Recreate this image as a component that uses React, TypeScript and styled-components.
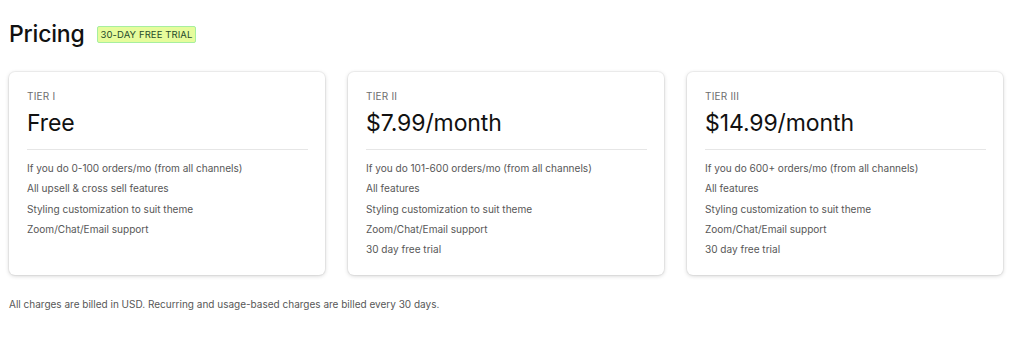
import React from "react";
import styled, { createGlobalStyle } from "styled-components";

const Global = createGlobalStyle`
  html, body { margin: 0; padding: 0; background: #ffffff; }
  body { font-family: Inter, "Noto Sans", sans-serif; color: #1a1a1a; }
`;

const Page = styled.div`
  width: 994px;
  padding: 18px 9px 0 9px;
  box-sizing: content-box;
`;

const Header = styled.div`
  display: flex;
  align-items: center;
  gap: 12px;
  height: 32px;
`;

const Title = styled.h1`
  margin: 0;
  font-size: 23px;
  font-weight: 500;
  letter-spacing: -0.2px;
  color: #111;
`;

const Badge = styled.span`
  display: inline-flex;
  align-items: center;
  height: 15px;
  padding: 0 3px;
  background: #e6fc9c;
  border: 1px solid #a6ef9f;
  border-radius: 2px;
  font-size: 9.5px;
  color: #254b2b;
  letter-spacing: 0.1px;
  margin-top: 1px;
`;

const Grid = styled.div`
  display: grid;
  grid-template-columns: repeat(3, 1fr);
  gap: 23px;
  margin-top: 22px;
`;

const Card = styled.div`
  background: #fff;
  border-radius: 6px;
  box-shadow: 0 0 0 1px rgba(0, 0, 0, 0.04), 0 1px 4px rgba(0, 0, 0, 0.18);
  padding: 18px 17px 24px 18px;
  height: 203px;
  box-sizing: border-box;
`;

const Tier = styled.div`
  font-size: 10px;
  color: #6d6d6d;
  letter-spacing: 0.2px;
  line-height: 12px;
`;

const Price = styled.div`
  font-size: 23px;
  color: #111;
  margin-top: 6px;
  line-height: 30px;
  letter-spacing: -0.1px;
`;

const Divider = styled.hr`
  border: 0;
  border-top: 1px solid #e6e6e6;
  margin: 11px 0 8px 0;
`;

const Features = styled.ul`
  list-style: none;
  margin: 0;
  padding: 0;
  display: flex;
  flex-direction: column;
`;

const Feature = styled.li`
  font-size: 10.05px;
  color: #575757;
  line-height: 20.3px;
`;

const Footnote = styled.p`
  margin: 23px 0 0 0;
  font-size: 10px;
  color: #575757;
`;

const tiers = [
  {
    tier: "Tier I",
    price: "Free",
    features: [
      "If you do 0-100 orders/mo (from all channels)",
      "All upsell & cross sell features",
      "Styling customization to suit theme",
      "Zoom/Chat/Email support",
    ],
  },
  {
    tier: "Tier II",
    price: "$7.99/month",
    features: [
      "If you do 101-600 orders/mo (from all channels)",
      "All features",
      "Styling customization to suit theme",
      "Zoom/Chat/Email support",
      "30 day free trial",
    ],
  },
  {
    tier: "Tier III",
    price: "$14.99/month",
    features: [
      "If you do 600+ orders/mo (from all channels)",
      "All features",
      "Styling customization to suit theme",
      "Zoom/Chat/Email support",
      "30 day free trial",
    ],
  },
];

export default function App() {
  return (
    <>
      <Global />
      <Page>
        <Header>
          <Title>Pricing</Title>
          <Badge>30-DAY FREE TRIAL</Badge>
        </Header>
        <Grid>
          {tiers.map((t) => (
            <Card key={t.tier}>
              <Tier>{t.tier.toUpperCase()}</Tier>
              <Price>{t.price}</Price>
              <Divider />
              <Features>
                {t.features.map((f) => (
                  <Feature key={f}>{f}</Feature>
                ))}
              </Features>
            </Card>
          ))}
        </Grid>
        <Footnote>
          All charges are billed in USD. Recurring and usage-based charges are billed every 30 days.
        </Footnote>
      </Page>
    </>
  );
}
